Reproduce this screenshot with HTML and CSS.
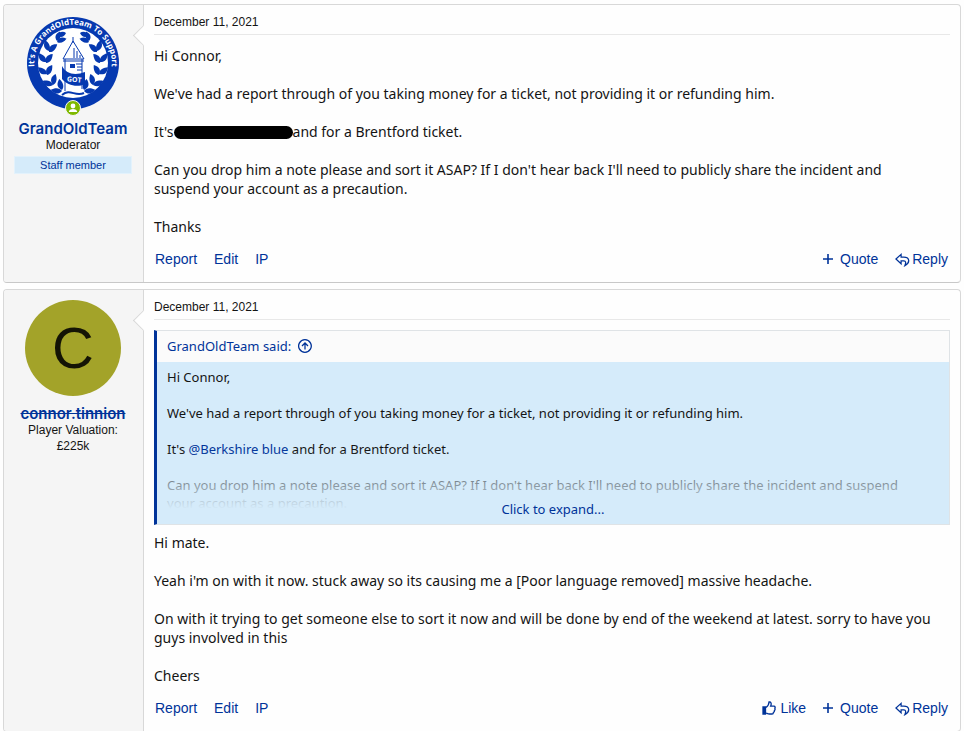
FILE: index.html
```html
<!DOCTYPE html>
<html lang="en">
<head>
    <meta charset="UTF-8">
    <meta name="viewport" content="width=device-width, initial-scale=1.0">
    <title>Conversation</title>
    <link rel="stylesheet" href="styles.css">
</head>
<body>
    <svg class="sprite" aria-hidden="true">
        <symbol id="icon-reply" viewBox="0 0 16 14">
            <path d="M6.5 1 L1 6 L6.5 11 V8 H9.5 C11.5 8 12 9.5 10.5 13 C14 11 15 9 14.5 7 C14 5 12 4 9.5 4 H6.5 Z"/>
        </symbol>
        <symbol id="icon-like" viewBox="0 0 14 14">
            <path d="M4 6.5 C6 5 7 3.5 7 1 C9 .6 9.8 2.5 8.6 5.2 H12 C13.2 5.2 13.4 6.5 12.8 7.3 C13.3 8.2 13 9 12.4 9.5 C12.6 10.5 12 11.2 11.4 11.4 C11.4 12.6 10.8 13 10 13 H7.5 C6 13 5 12.3 4 12"/>
            <path d="M1 6 H3.5 V13 H1 Z" fill="#003399"/>
        </symbol>
        <symbol id="icon-plus" viewBox="0 0 10 10">
            <path d="M5 0 V10 M0 5 H10"/>
        </symbol>
    </svg>

    <article class="message">
        <div class="message-user">
            <div class="avatar">
                <svg class="avatar-logo" viewBox="0 0 96 96" role="img" aria-label="GrandOldTeam">
                    <defs>
                        <path id="crest-arc" d="M9.6 54 A38.8 38.8 0 1 1 86.4 54"/>
                        <path id="leaf" d="M0 0 C-6 -1 -8 -5 -6 -11 C-2 -9 2 -5 0 0 Z"/>
                        <g id="branch">
                            <use href="#leaf" transform="translate(41 18) rotate(-75) scale(.8)"/>
                            <use href="#leaf" transform="translate(32 26) rotate(45) scale(.8)"/>
                            <use href="#leaf" transform="translate(32 27) rotate(100) scale(.8)"/>
                            <use href="#leaf" transform="translate(24 36) rotate(10) scale(.9)"/>
                            <use href="#leaf" transform="translate(24 37) rotate(75) scale(.9)"/>
                            <use href="#leaf" transform="translate(21 47) rotate(-10) scale(.9)"/>
                            <use href="#leaf" transform="translate(21 48) rotate(65) scale(.9)"/>
                            <use href="#leaf" transform="translate(22 59) rotate(-24) scale(.9)"/>
                            <use href="#leaf" transform="translate(22 60) rotate(56) scale(.9)"/>
                            <use href="#leaf" transform="translate(28 70) rotate(-40) scale(.9)"/>
                            <use href="#leaf" transform="translate(28 70) rotate(42) scale(.9)"/>
                            <use href="#leaf" transform="translate(37 76) rotate(-55) scale(.9)"/>
                            <use href="#leaf" transform="translate(37 75) rotate(15) scale(.9)"/>
                        </g>
                    </defs>
                    <circle cx="48" cy="48" r="46" fill="#0639b0"/>
                    <circle cx="48" cy="48" r="35" fill="#fff"/>
                    <text class="crest-text"><textPath href="#crest-arc" startOffset="50%">It's A GrandOldTeam To Support</textPath></text>
                    <g fill="#0639b0">
                        <use href="#branch"/>
                        <use href="#branch" transform="translate(96 0) scale(-1 1)"/>
                    </g>
                    <path d="M40 78 V45 H57 V78 Z" fill="#fff"/>
                    <path d="M48 26 L38 44 H59 Z M40 44 V76 M57 44 V74" fill="#fff" stroke="#0639b0"/>
                    <path d="M48 22 V28 M38 46 H59 M49 33 V43 M52 36 V43 M55 40 V43 M51 49 H57 M52 52 H57 M52 55 H57" stroke="#0639b0" fill="none"/>
                    <path d="M45 49 H50 V53 H45 Z" fill="#0639b0"/>
                    <path d="M37 51 C41 59 50 61 60 57 V69 C52 73 42 70 37 64 Z" fill="#0639b0"/>
                    <text class="crest-got" x="49" y="67" transform="rotate(6 49 67)">GOT</text>
                    <path d="M37 80 C45 73 50 82 59 78" fill="none" stroke="#0639b0" stroke-width="2"/>
                </svg>
                <svg class="online-badge" viewBox="0 0 16 16" role="img" aria-label="Online now">
                    <circle cx="8" cy="8" r="7.5" fill="#7fb900" stroke="#f5f5f5"/>
                    <circle cx="8" cy="6" r="2.4" fill="#fff"/>
                    <path d="M3.8 12 C3.8 8 12.2 8 12.2 12 Z" fill="#fff"/>
                </svg>
            </div>
            <a class="username" href="#">GrandOldTeam</a>
            <div class="user-title">Moderator</div>
            <div class="user-banner">Staff member</div>
        </div>
        <div class="message-main">
            <time class="message-date">December 11, 2021</time>
            <div class="message-body">
                <p>Hi Connor,</p>
                <p>We've had a report through of you taking money for a ticket, not providing it or refunding him.</p>
                <p>It's<span class="redacted"></span>and for a Brentford ticket.</p>
                <p>Can you drop him a note please and sort it ASAP? If I don't hear back I'll need to publicly share the incident and suspend your account as a precaution.</p>
                <p>Thanks</p>
            </div>
            <div class="message-actions">
                <a href="#">Report</a>
                <a href="#">Edit</a>
                <a href="#">IP</a>
                <a class="push-right" href="#"><svg class="icon plus"><use href="#icon-plus"/></svg>Quote</a>
                <a href="#"><svg class="icon reply"><use href="#icon-reply"/></svg>Reply</a>
            </div>
        </div>
    </article>

    <article class="message">
        <div class="message-user">
            <div class="avatar avatar-letter">C</div>
            <a class="username banned" href="#">connor.tinnion</a>
            <div class="user-title">Player Valuation:<br>£225k</div>
        </div>
        <div class="message-main">
            <time class="message-date">December 11, 2021</time>
            <blockquote class="quote">
                <a class="quote-title" href="#">GrandOldTeam said:
                    <svg class="icon up" viewBox="0 0 14 14"><path d="M7 .7 A6.3 6.3 0 1 1 6.9 .7 Z M7 10.5 V4 M4 7 L7 4 L10 7"/></svg>
                </a>
                <div class="quote-content">
                    <p>Hi Connor,</p>
                    <p>We've had a report through of you taking money for a ticket, not providing it or refunding him.</p>
                    <p>It's <a href="#">@Berkshire blue</a> and for a Brentford ticket.</p>
                    <p>Can you drop him a note please and sort it ASAP? If I don't hear back I'll need to publicly share the incident and suspend your account as a precaution.</p>
                    <div class="quote-expand"><button type="button">Click to expand...</button></div>
                </div>
            </blockquote>
            <div class="message-body">
                <p>Hi mate.</p>
                <p>Yeah i'm on with it now. stuck away so its causing me a [Poor language removed] massive headache.</p>
                <p>On with it trying to get someone else to sort it now and will be done by end of the weekend at latest. sorry to have you guys involved in this</p>
                <p>Cheers</p>
            </div>
            <div class="message-actions">
                <a href="#">Report</a>
                <a href="#">Edit</a>
                <a href="#">IP</a>
                <a class="push-right" href="#"><svg class="icon like"><use href="#icon-like"/></svg>Like</a>
                <a href="#"><svg class="icon plus"><use href="#icon-plus"/></svg>Quote</a>
                <a href="#"><svg class="icon reply"><use href="#icon-reply"/></svg>Reply</a>
            </div>
        </div>
    </article>
</body>
</html>
```
FILE: styles.css
```css
* {
    box-sizing: border-box;
}
body {
    margin: 0;
    padding: 4px 3px 0;
    background-color: #fefefe;
    color: #141414;
    font-family: "Noto Sans", "Segoe UI", sans-serif;
    font-size: 14px;
    line-height: 19px;
}
a {
    color: #003399;
    text-decoration: none;
}
p {
    margin: 0 0 19px;
}
.sprite {
    display: none;
}
.message {
    display: flex;
    margin-bottom: 6px;
    border: 1px solid #d8d8d8;
    border-bottom-color: #c8c8c8;
    border-radius: 4px;
    background-color: #fefefe;
}

/* user column */
.message-user {
    position: relative;
    flex: 0 0 140px;
    padding: 10px 11px 10px 10px;
    border-right: 1px solid #d8d8d8;
    border-radius: 3px 0 0 3px;
    background-color: #f5f5f5;
    font-family: "Liberation Sans", Arial, sans-serif;
    font-size: 12px;
    line-height: 16px;
    text-align: center;
}
.message-user::after {
    content: "";
    position: absolute;
    top: 23px;
    right: -8px;
    width: 14px;
    height: 14px;
    border: 1px solid #d8d8d8;
    border-width: 0 0 1px 1px;
    background-color: #fefefe;
    transform: rotate(45deg);
}
.avatar {
    position: relative;
    width: 96px;
    height: 96px;
    margin: 0 auto 10px;
}
.avatar-logo {
    display: block;
    width: 100%;
    height: 100%;
}
.crest-text,
.crest-got {
    fill: #fff;
    font-family: "Open Sans", sans-serif;
    font-weight: 700;
    text-anchor: middle;
}
.crest-text {
    font-size: 8px;
}
.crest-got {
    font-size: 7px;
}
.online-badge {
    position: absolute;
    bottom: -5px;
    left: 40px;
    width: 16px;
    height: 16px;
}
.avatar-letter {
    border-radius: 50%;
    background-color: #a3a329;
    color: #141405;
    font-size: 58px;
    line-height: 96px;
}
.username {
    display: block;
    font-family: Inter, sans-serif;
    font-size: 15px;
    font-weight: 600;
}
.banned {
    text-decoration: line-through;
}
.user-banner {
    margin-top: 3px;
    border: 1px solid #e3f2fc;
    background-color: #d5ebfa;
    color: #003399;
    font-size: 11px;
}

/* content column */
.message-main {
    flex: 1;
    min-width: 0;
    padding: 8px 10px 13px;
}
.message-date {
    display: block;
    margin-bottom: 10px;
    padding-bottom: 3px;
    border-bottom: 1px solid #e8e8e8;
    font-family: "Liberation Sans", Arial, sans-serif;
    font-size: 12px;
    line-height: 18px;
}
.message-body {
    padding: 1px 12px 0 0;
}
.message-body p:last-child {
    margin-bottom: 13px;
}
.redacted {
    display: inline-block;
    width: 119px;
    height: 13px;
    border-radius: 7px;
    background-color: #000;
    vertical-align: -2px;
}
.message-actions {
    display: flex;
    gap: 17px;
    padding: 0 2px 0 1px;
    font-family: "Liberation Sans", Arial, sans-serif;
    font-size: 14px;
    line-height: 20px;
}
.push-right {
    margin-left: auto;
}
.icon {
    fill: none;
    stroke: #003399;
    stroke-width: 1.3;
}
.plus {
    width: 10px;
    height: 10px;
    margin-right: 7px;
    stroke-width: 1.6;
}
.reply {
    width: 15px;
    height: 14px;
    margin-right: 2px;
    vertical-align: -3px;
}
.like {
    width: 14px;
    height: 14px;
    margin-right: 4px;
    vertical-align: -2px;
}
.up {
    width: 14px;
    height: 14px;
    margin-left: 3px;
    vertical-align: -2px;
}

/* quoted message */
.quote {
    margin: 0 0 7px;
    border: 1px solid #dfe3e6;
    border-left: 3px solid #003399;
    background-color: #fbfbfb;
    font-size: 13px;
    line-height: 18px;
}
.quote-title {
    display: block;
    padding: 6px 10px 7px;
}
.quote-content {
    position: relative;
    height: 162px;
    padding: 6px 26px 6px 10px;
    overflow: hidden;
    background-color: #d5ebfa;
}
.quote-content p {
    margin-bottom: 18px;
}
.quote-expand {
    position: absolute;
    right: 0;
    bottom: 0;
    left: 0;
    height: 75px;
    padding-top: 51px;
    background: linear-gradient(to bottom, rgba(213, 235, 250, 0) 0%, #d5ebfa 80%);
    text-align: center;
}
.quote-expand button {
    padding: 0;
    border: 0;
    background: none;
    color: #003399;
    font: inherit;
    cursor: pointer;
}
```
